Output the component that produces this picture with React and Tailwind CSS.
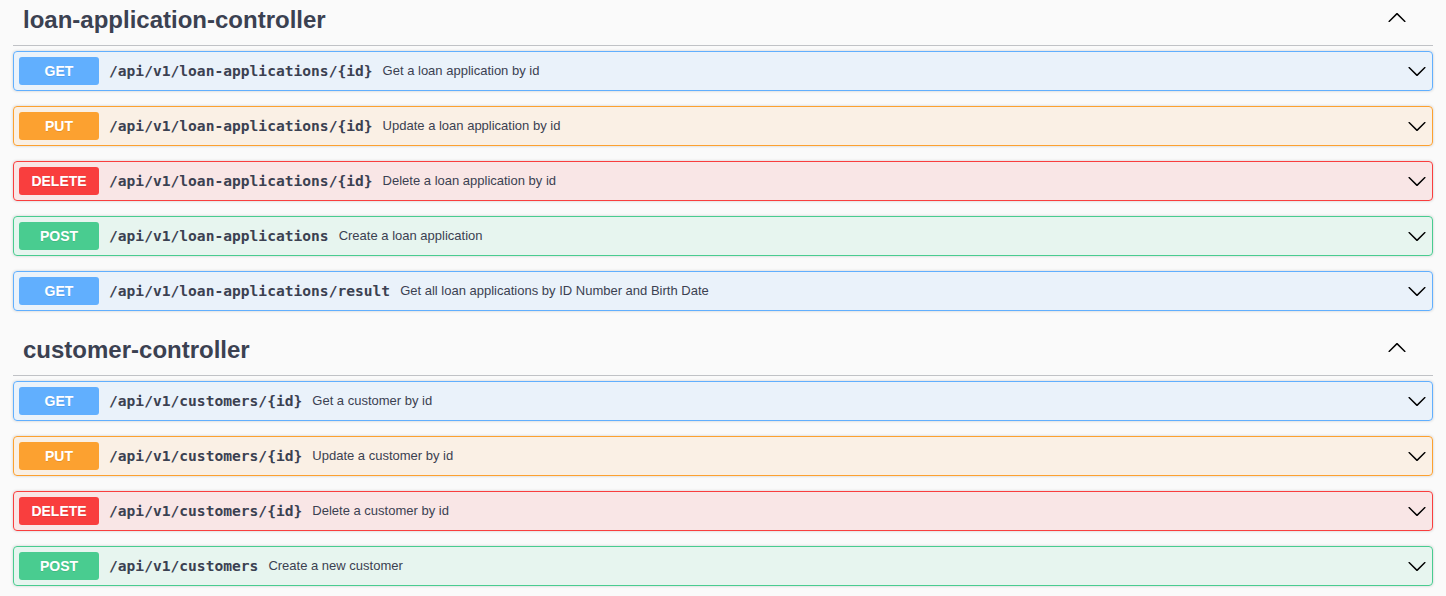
import React from "react";

const STYLES = {
  GET: { row: "border-[#61affe] bg-[rgba(97,175,254,0.1)]", badge: "bg-[#61affe]" },
  PUT: { row: "border-[#fca130] bg-[rgba(252,161,48,0.1)]", badge: "bg-[#fca130]" },
  DELETE: { row: "border-[#f93e3e] bg-[rgba(249,62,62,0.1)]", badge: "bg-[#f93e3e]" },
  POST: { row: "border-[#49cc90] bg-[rgba(73,204,144,0.1)]", badge: "bg-[#49cc90]" },
};

const sections = [
  {
    name: "loan-application-controller",
    ops: [
      ["GET", "/api/v1/loan-applications/{id}", "Get a loan application by id"],
      ["PUT", "/api/v1/loan-applications/{id}", "Update a loan application by id"],
      ["DELETE", "/api/v1/loan-applications/{id}", "Delete a loan application by id"],
      ["POST", "/api/v1/loan-applications", "Create a loan application"],
      ["GET", "/api/v1/loan-applications/result", "Get all loan applications by ID Number and Birth Date"],
    ],
  },
  {
    name: "customer-controller",
    ops: [
      ["GET", "/api/v1/customers/{id}", "Get a customer by id"],
      ["PUT", "/api/v1/customers/{id}", "Update a customer by id"],
      ["DELETE", "/api/v1/customers/{id}", "Delete a customer by id"],
      ["POST", "/api/v1/customers", "Create a new customer"],
    ],
  },
];

function ArrowDown() {
  return (
    <svg width="20" height="20" viewBox="0 0 20 20" className="shrink-0">
      <path
        fill="#000"
        d="M17.418 6.109c.272-.268.709-.268.979 0s.271.701 0 .969l-7.908 7.83c-.27.268-.707.268-.979 0l-7.908-7.83c-.27-.268-.27-.701 0-.969.271-.268.709-.268.979 0L10 13.25l7.418-7.141z"
      />
    </svg>
  );
}

function ArrowUp() {
  return (
    <svg width="20" height="20" viewBox="0 0 20 20" className="shrink-0">
      <path
        fill="#000"
        d="M17.418 14.908c.272.268.709.268.979 0s.271-.701 0-.969l-7.908-7.83c-.27-.268-.707-.268-.979 0l-7.908 7.83c-.27.268-.27.701 0 .969.271.268.709.268.979 0L10 7.767l7.418 7.141z"
      />
    </svg>
  );
}

function Op({ method, path, desc }) {
  const s = STYLES[method];
  return (
    <div className={`mb-[15px] flex items-center rounded-[4px] border p-[5px] shadow-[0_0_3px_rgba(0,0,0,0.19)] ${s.row}`}>
      <span
        className={`flex h-[28px] w-[80px] shrink-0 items-center justify-center rounded-[3px] text-[14px] font-bold text-white [text-shadow:0_1px_0_rgba(0,0,0,0.1)] ${s.badge}`}
        style={{ fontFamily: '"Liberation Sans", Arial, sans-serif' }}
      >
        {method}
      </span>
      <span
        className="px-[10px] text-[14.6px] font-bold text-[#3b4151]"
        style={{ fontFamily: '"DejaVu Sans Mono", "Liberation Mono", monospace' }}
      >
        {path}
      </span>
      <span
        className="flex-1 text-[13px] text-[#3b4151]"
        style={{ fontFamily: '"Liberation Sans", Arial, sans-serif' }}
      >
        {desc}
      </span>
      <ArrowDown />
    </div>
  );
}

function Section({ name, ops, first }) {
  return (
    <div className={first ? "flow-root" : "flow-root pt-[4px]"}>
      <div className="mb-[5px] flex h-[46px] items-center border-b border-[rgba(59,65,81,0.3)] pb-[5px] pl-[10px] pr-[26px]">
        <h3
          className="flex-1 text-[24px] font-bold text-[#3b4151]"
          style={{ fontFamily: '"Liberation Sans", Arial, sans-serif' }}
        >
          {name}
        </h3>
        <div className="mb-[6px]">
          <ArrowUp />
        </div>
      </div>
      {ops.map(([m, p, d], i) => (
        <Op key={i} method={m} path={p} desc={d} />
      ))}
    </div>
  );
}

export default function App() {
  return (
    <div className="min-h-[596px] w-full bg-[#fafafa] px-[13px]">
      {sections.map((s, i) => (
        <Section key={s.name} name={s.name} ops={s.ops} first={i === 0} />
      ))}
    </div>
  );
}
